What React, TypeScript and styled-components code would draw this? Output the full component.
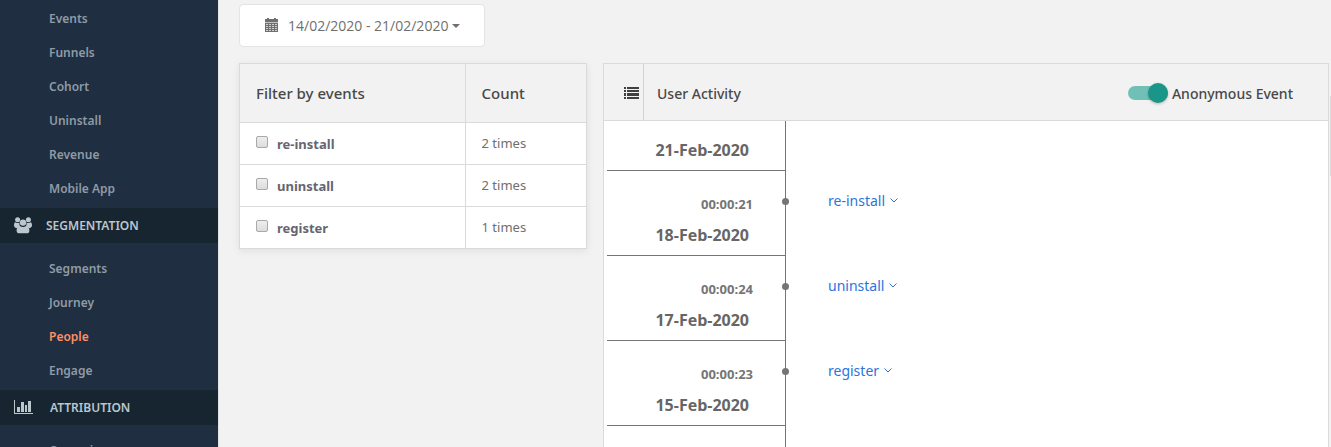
import React from "react";
import styled, { createGlobalStyle, css } from "styled-components";

const GlobalStyle = createGlobalStyle`
  *, *::before, *::after { box-sizing: border-box; }
  body {
    margin: 0;
    overflow: hidden;
    background: #f2f2f2;
    color: #6f6f6f;
    font-family: "Noto Sans", "Open Sans", sans-serif;
    font-size: 14px;
  }
`;

const Page = styled.div`
  position: relative;
  display: flex;
  height: 100vh;
  overflow: hidden;
`;

const ScrollHint = styled.div`
  position: absolute;
  top: 96px;
  right: 0;
  width: 1px;
  height: 80px;
  background: #dcdcdc;
`;

const Sidebar = styled.nav`
  flex: 0 0 219px;
  background: #1f2e40;
  border-right: 1px solid #e3e3e3;
  overflow: hidden;
`;

const NavList = styled.ul<{ $first?: boolean }>`
  list-style: none;
  margin: 0;
  padding: ${(p) => (p.$first ? "2px" : "9px")} 0 2px;
`;

const NavLink = styled.a<{ $active?: boolean }>`
  display: block;
  padding-left: 49px;
  font-size: 12px;
  font-weight: 600;
  line-height: 34px;
  text-decoration: none;
  color: ${(p) => (p.$active ? "#fd9065" : "#8f9ba6")};
`;

const NavHeading = styled.h2<{ $gap: number }>`
  display: flex;
  align-items: center;
  gap: ${(p) => p.$gap}px;
  height: 35px;
  margin: 0;
  padding-left: 14px;
  background: #172531;
  color: #bcc6cd;
  font-size: 12px;
  font-weight: 600;
`;

const Main = styled.main`
  flex: 1;
  min-width: 0;
  padding: 4px 2px 0 20px;
`;

const DateButton = styled.button`
  display: flex;
  align-items: center;
  height: 43px;
  padding: 0 24px 0 25px;
  background: #fff;
  border: 1px solid #e4e4e4;
  border-radius: 4px;
  color: #6f6f6f;
  font-family: "Open Sans", sans-serif;
  font-size: 14px;
  white-space: nowrap;

  span { margin: 0 4px 0 10px; }
`;

const Columns = styled.div`
  display: grid;
  grid-template-columns: 348px minmax(0, 1fr);
  align-items: start;
  gap: 16px;
  margin-top: 16px;
`;

const FilterTable = styled.table`
  width: 100%;
  border-collapse: collapse;
  table-layout: fixed;
  background: #fff;
  box-shadow: 0 2px 8px rgba(0, 0, 0, 0.08);
`;

const HeadCell = styled.th<{ $narrow?: boolean }>`
  width: ${(p) => (p.$narrow ? "35%" : "65%")};
  height: 59px;
  padding: 0 16px;
  background: #f2f2f2;
  border: 1px solid #dadada;
  color: #484848;
  font-size: 15px;
  font-weight: 500;
  text-align: left;
`;

const Cell = styled.td`
  height: 42px;
  padding: 0 16px 1px;
  border: 1px solid #dadada;
  font-size: 13px;
`;

const CheckLabel = styled.label`
  display: flex;
  align-items: center;
  gap: 9px;
  padding-top: 2px;
  color: #66656f;
  font-weight: 700;
`;

const Checkbox = styled.input`
  appearance: none;
  width: 12px;
  height: 12px;
  margin: 0 0 4px;
  border: 1px solid #a9a9a9;
  border-radius: 2px;
  background: linear-gradient(#eeeeee, #dcdcdc);

  &:checked { background: #199688; }
`;

const Panel = styled.section`
  background: #fff;
  border: 1px solid #dadada;
`;

const PanelHead = styled.header`
  display: flex;
  align-items: center;
  height: 57px;
  padding: 2px 35px 0 0;
  background: #f2f2f2;
  border-bottom: 1px solid #dadada;
  color: #484848;
`;

const ListIconCell = styled.span`
  display: flex;
  align-items: center;
  justify-content: flex-end;
  align-self: stretch;
  width: 40px;
  margin-top: -2px;
  padding: 2px 4px 0 0;
  border-right: 1px solid #ced4da;
`;

const PanelTitle = styled.h2`
  flex: 1;
  margin: 0;
  padding-left: 13px;
  font-size: 14px;
  font-weight: 500;
`;

const SwitchLabel = styled.label`
  display: flex;
  align-items: center;
  gap: 4px;
  font-size: 14px;
  font-weight: 500;
`;

const Switch = styled.input`
  appearance: none;
  display: flex;
  align-items: center;
  width: 40px;
  height: 14px;
  margin: 0;
  border-radius: 7px;
  background: #bdbdbd;

  &::before {
    content: "";
    width: 20px;
    height: 20px;
    border-radius: 50%;
    background: #fafafa;
    box-shadow: 0 1px 3px rgba(0, 0, 0, 0.25);
  }
  &:checked {
    justify-content: flex-end;
    background: #71c0b7;
  }
  &:checked::before { background: #199688; }
`;

const Timeline = styled.ol`
  list-style: none;
  margin: 0;
  padding: 0;
`;

const rail = css`
  border-right: 1px solid #757575;
`;

const DayHeading = styled.h3`
  display: flex;
  align-items: flex-end;
  width: 182px;
  height: 50px;
  margin: 0;
  padding: 0 0 0 3px;
  ${rail}

  span {
    flex: 1;
    padding: 0 36px 9px 0;
    border-bottom: 1px solid #757575;
    color: #666;
    font-family: "Open Sans", sans-serif;
    font-size: 16px;
    font-weight: 700;
    line-height: 22px;
    text-align: right;
  }
`;

const Entry = styled.div`
  display: flex;
  height: 35px;
`;

const Time = styled.time`
  position: relative;
  width: 182px;
  padding: 23px 32px 0 0;
  ${rail}
  color: #757575;
  font-family: "Open Sans", sans-serif;
  font-size: 13px;
  font-weight: 700;
  line-height: 20px;
  text-align: right;

  &::after {
    content: "";
    position: absolute;
    right: -4px;
    top: 27px;
    width: 7px;
    height: 7px;
    border-radius: 50%;
    background: #757575;
  }
`;

const EventButton = styled.button`
  display: flex;
  align-items: center;
  gap: 5px;
  height: 20px;
  margin: 19px 0 0 42px;
  padding: 0;
  background: none;
  border: 0;
  color: #2a75dc;
  font: inherit;
`;

const UsersIcon = () => (
  <svg width="18" height="17" viewBox="0 0 18 17" fill="currentColor" aria-hidden="true">
    <circle cx="3.6" cy="2.8" r="2.5" />
    <circle cx="14.4" cy="2.8" r="2.5" />
    <path d="M0 8.600C0 6.600.5 5.300 1.400 5.300c.5 0 1.100.8 2.500.8.6 0 1.100-.1 1.600-.3-.3 1.600.1 2.800.8 3.600-1.400 0-2.600.6-3.400 1.500H1.700C.6 10.300 0 9.700 0 8.600z" />
    <path d="M18 8.600c0-2-.5-3.300-1.400-3.300-.5 0-1.100.8-2.500.8-.6 0-1.100-.1-1.600-.3.3 1.600-.1 2.800-.8 3.600 1.400 0 2.600.6 3.400 1.500h1.200c1.100-.6 1.700-1.200 1.700-2.300z" />
    <circle cx="9" cy="5.600" r="3.200" />
    <path d="M5.500 8.700c-2 0-2.900 2.200-2.900 5 0 1.700 1.100 2.600 2.600 2.600h7.600c1.500 0 2.600-.9 2.600-2.600 0-2.800-.9-5-2.900-5-.5 0-1.500 1.300-3.500 1.300S6 8.700 5.500 8.700z" />
  </svg>
);

const ChartIcon = () => (
  <svg width="19" height="16" viewBox="0 0 19 16" fill="currentColor" aria-hidden="true">
    <path d="M0 0h1v13h18v1H0zM3 7h3v5H3zM7 2h3v10H7zM11 5h2v7h-2zM14 1h3v11h-3z" />
  </svg>
);

const CalendarIcon = () => (
  <svg width="13" height="16" viewBox="0 0 13 16" fill="#6f6f6f" aria-hidden="true">
    <path d="M0 1h2V0h2v1h5V0h2v1h2v3H0z" />
    <path d="M0 4h13v1H0z" fill="#c4c4c4" />
    <path d="M0 5h13v9H0z" />
    <path d="M1 6h2v1H1zM4 6h2v1H4zM7 6h2v1H7zM10 6h2v1h-2zM1 8h2v1H1zM4 8h2v1H4zM7 8h2v1H7zM10 8h2v1h-2zM1 10h2v1H1zM4 10h2v1H4zM7 10h2v1H7zM10 10h2v1h-2zM1 12h2v1H1zM4 12h2v1H4zM7 12h2v1H7zM10 12h2v1h-2z" fill="#d0d0d0" />
  </svg>
);

const ListIcon = () => (
  <svg width="15" height="12" viewBox="0 0 15 12" fill="#404040" aria-hidden="true">
    <path d="M0 0h2v2H0zM3 0h12v2H3zM0 3h2v2H0zM3 3h12v2H3zM0 6h2v3H0zM3 6h12v3H3zM0 10h2v2H0zM3 10h12v2H3z" />
  </svg>
);

const Caret = () => (
  <svg width="8" height="4" viewBox="0 0 8 4" aria-hidden="true">
    <path d="M0 0h8L4 4z" fill="#6f6f6f" />
  </svg>
);

const AngleDown = () => (
  <svg width="8" height="5" viewBox="0 0 8 5" fill="none" stroke="currentColor" aria-hidden="true">
    <path d="M.5.5 4 4 7.500.5" />
  </svg>
);

const filters = [
  { name: "re-install", count: 2 },
  { name: "uninstall", count: 2 },
  { name: "register", count: 1 },
];

const days = [
  { date: "21-Feb-2020", time: "00:00:21", event: "re-install" },
  { date: "18-Feb-2020", time: "00:00:24", event: "uninstall" },
  { date: "17-Feb-2020", time: "00:00:23", event: "register" },
  { date: "15-Feb-2020" },
];

const Links = ({ items, first, active }: { items: string[]; first?: boolean; active?: string }) => (
  <NavList $first={first}>
    {items.map((item) => (
      <li key={item}>
        <NavLink href="#" $active={item === active}>{item}</NavLink>
      </li>
    ))}
  </NavList>
);

export default function App() {
  return (
    <>
      <GlobalStyle />
      <Page>
        <Sidebar>
          <Links first items={["Events", "Funnels", "Cohort", "Uninstall", "Revenue", "Mobile App"]} />
          <NavHeading $gap={14}><UsersIcon />SEGMENTATION</NavHeading>
          <Links items={["Segments", "Journey", "People", "Engage"]} active="People" />
          <NavHeading $gap={17}><ChartIcon />ATTRIBUTION</NavHeading>
          <Links items={["Campaigns"]} />
        </Sidebar>
        <Main>
          <DateButton type="button">
            <CalendarIcon />
            <span>14/02/2020 - 21/02/2020</span>
            <Caret />
          </DateButton>
          <Columns>
            <FilterTable>
              <thead>
                <tr>
                  <HeadCell>Filter by events</HeadCell>
                  <HeadCell $narrow>Count</HeadCell>
                </tr>
              </thead>
              <tbody>
                {filters.map((f) => (
                  <tr key={f.name}>
                    <Cell>
                      <CheckLabel><Checkbox type="checkbox" />{f.name}</CheckLabel>
                    </Cell>
                    <Cell>{f.count} times</Cell>
                  </tr>
                ))}
              </tbody>
            </FilterTable>
            <Panel>
              <PanelHead>
                <ListIconCell><ListIcon /></ListIconCell>
                <PanelTitle>User Activity</PanelTitle>
                <SwitchLabel><Switch type="checkbox" role="switch" defaultChecked />Anonymous Event</SwitchLabel>
              </PanelHead>
              <Timeline>
                {days.map((d) => (
                  <li key={d.date}>
                    <DayHeading><span>{d.date}</span></DayHeading>
                    <Entry>
                      <Time>{d.time}</Time>
                      {d.event && <EventButton type="button">{d.event}<AngleDown /></EventButton>}
                    </Entry>
                  </li>
                ))}
              </Timeline>
            </Panel>
          </Columns>
        </Main>
        <ScrollHint />
      </Page>
    </>
  );
}
